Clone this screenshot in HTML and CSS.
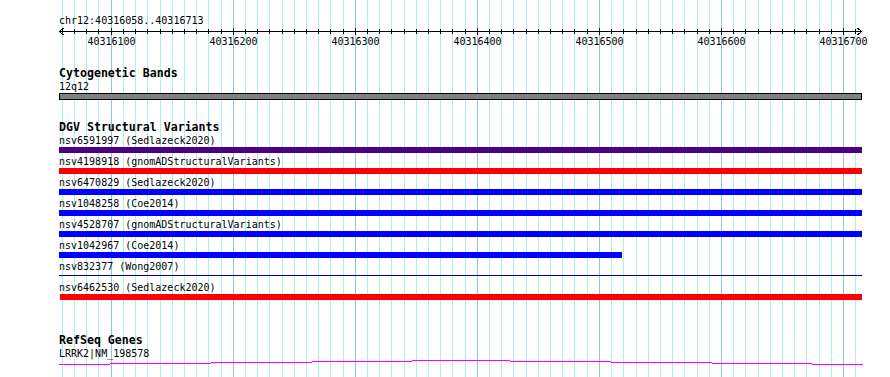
FILE: index.html
```html
<!DOCTYPE html>
<html lang="en">
<head>
    <meta charset="UTF-8">
    <meta name="viewport" content="width=device-width, initial-scale=1.0">
    <title>chr12:40316058..40316713</title>
    <link rel="stylesheet" href="styles.css">
</head>
<body>
    <div class="browser">
        <svg id="grid" class="grid" width="890" height="377" shape-rendering="crispEdges"></svg>
        <div class="tracks">
            <div class="ruler">
                <div class="ruler-title">chr12:40316058..40316713</div>
                <svg id="scale" class="scale" width="803" height="20" shape-rendering="crispEdges">
                    <rect x="0" y="4" width="803" height="1"/>
                    <path class="arrow" d="M4.5 1 L0.5 4.5 L4.5 8 M798.5 1 L802.5 4.5 L798.5 8"/>
                </svg>
            </div>

            <section class="track track-bands">
                <h2 class="track-title">Cytogenetic Bands</h2>
                <div class="feature">
                    <div class="feature-label">12q12</div>
                    <div class="band"></div>
                </div>
            </section>

            <section class="track track-dgv">
                <h2 class="track-title">DGV Structural Variants</h2>
                <div class="feature">
                    <div class="feature-label">nsv6591997 (Sedlazeck2020)</div>
                    <div class="bar bar-purple"></div>
                </div>
                <div class="feature">
                    <div class="feature-label">nsv4198918 (gnomADStructuralVariants)</div>
                    <div class="bar bar-red"></div>
                </div>
                <div class="feature">
                    <div class="feature-label">nsv6470829 (Sedlazeck2020)</div>
                    <div class="bar bar-blue"></div>
                </div>
                <div class="feature">
                    <div class="feature-label">nsv1048258 (Coe2014)</div>
                    <div class="bar bar-blue"></div>
                </div>
                <div class="feature">
                    <div class="feature-label">nsv4528707 (gnomADStructuralVariants)</div>
                    <div class="bar bar-blue"></div>
                </div>
                <div class="feature">
                    <div class="feature-label">nsv1042967 (Coe2014)</div>
                    <div class="bar bar-blue" style="width: 563px"></div>
                </div>
                <div class="feature">
                    <div class="feature-label">nsv832377 (Wong2007)</div>
                    <div class="bar-line"></div>
                </div>
                <div class="feature">
                    <div class="feature-label">nsv6462530 (Sedlazeck2020)</div>
                    <div class="bar bar-red" style="margin-left: 1px; width: 802px"></div>
                </div>
            </section>

            <section class="track track-genes">
                <h2 class="track-title">RefSeq Genes</h2>
                <div class="feature">
                    <div class="feature-label">LRRK2|NM_198578</div>
                    <svg class="gene" width="805" height="5" shape-rendering="crispEdges">
                        <rect x="0" y="4" width="51" height="1"/>
                        <rect x="51" y="3" width="101" height="1"/>
                        <rect x="152" y="2" width="101" height="1"/>
                        <rect x="253" y="1" width="100" height="1"/>
                        <rect x="353" y="0" width="98" height="1"/>
                        <rect x="451" y="1" width="101" height="1"/>
                        <rect x="552" y="2" width="101" height="1"/>
                        <rect x="653" y="3" width="100" height="1"/>
                        <rect x="753" y="4" width="51" height="1"/>
                    </svg>
                </div>
            </section>
        </div>
    </div>

    <script>
        // grid every 10 bp, scale ticks on the ruler, labels every 100 bp
        const left = 59;
        const tickX = n => Math.round(110.7 + n * 12.205);

        let grid = "";
        let scale = "";
        for (let n = -4; n <= 61; n++) {
            const x = tickX(n);
            const major = n % 10 === 0;
            grid += `<rect x="${x}" y="0" width="1" height="377" class="${major ? "grid-major" : "grid-minor"}"/>`;
            const sx = x - left;
            if (major) {
                scale += `<rect x="${sx}" y="1" width="1" height="7"/>`;
                scale += `<text x="${sx + 0.5}" y="18" text-anchor="middle">${40316100 + n * 10}</text>`;
            } else {
                scale += `<rect x="${sx}" y="2" width="1" height="5"/>`;
            }
        }
        document.getElementById("grid").innerHTML = grid;
        document.getElementById("scale").insertAdjacentHTML("beforeend", scale);
    </script>
</body>
</html>
```

FILE: styles.css
```css
body {
    margin: 0;
    background: #fff;
    color: #000;
    font-family: "DejaVu Sans Mono", "Liberation Mono", monospace;
    font-size: 10px;
}
.browser {
    position: relative;
    width: 890px;
    height: 377px;
    overflow: hidden;
}
.grid {
    position: absolute;
    left: 0;
    top: 0;
}
.grid-minor {
    fill: #aaeeee;
}
.grid-major {
    fill: #8cc4e8;
}
.tracks {
    position: relative;
    width: 803px;
    padding-left: 59px;
}
.ruler {
    padding-top: 14px;
}
.ruler-title,
.feature-label {
    line-height: 13px;
    white-space: nowrap;
}
.scale {
    display: block;
    overflow: visible;
}
.scale text {
    font-family: "DejaVu Sans Mono", "Liberation Mono", monospace;
    font-size: 10px;
}
.scale .arrow {
    fill: none;
    stroke: #000;
    stroke-width: 1;
}
.track-title {
    margin: 0;
    font-size: 11.6px;
    font-weight: bold;
    line-height: 13px;
    white-space: nowrap;
}
.track-bands {
    margin-top: 20px;
}
.track-dgv {
    margin-top: 21px;
}
.track-genes {
    margin-top: 34px;
}
.band {
    height: 5px;
    border: 1px solid #000;
    background: #808080;
}
.bar {
    width: 803px;
    height: 6px;
    margin-bottom: 2px;
}
.bar-purple {
    background: #4b0082;
}
.bar-red {
    background: #ff0000;
}
.bar-blue {
    background: #0000ff;
}
.bar-line {
    height: 1px;
    margin: 2px 0 5px;
    background: #0000a0;
}
.gene {
    display: block;
    fill: #ff00ff;
}
```
